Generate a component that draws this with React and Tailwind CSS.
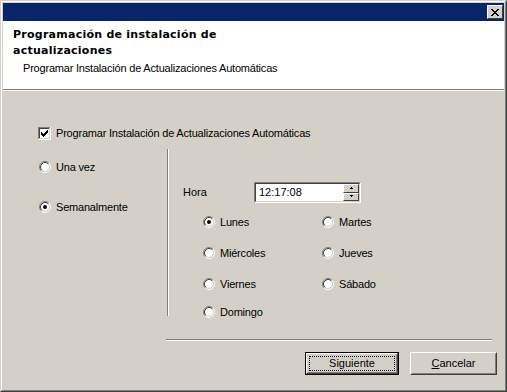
import React from "react";

const font = { fontFamily: '"Liberation Sans", Arial, sans-serif' };
const titleFont = { fontFamily: '"DejaVu Sans", Verdana, sans-serif' };

function Radio({ checked }) {
  return (
    <svg width="12" height="12" viewBox="0 0 12 12" className="shrink-0">
      <circle cx="6" cy="6" r="4" fill="#ffffff" />
      <path d="M2.11 9.89 A5.5 5.5 0 0 1 9.89 2.11" stroke="#808080" fill="none" strokeWidth="1" />
      <path d="M9.89 2.11 A5.5 5.5 0 0 1 2.11 9.89" stroke="#ffffff" fill="none" strokeWidth="1" />
      <path d="M2.82 9.18 A4.5 4.5 0 0 1 9.18 2.82" stroke="#404040" fill="none" strokeWidth="1" />
      <path d="M9.18 2.82 A4.5 4.5 0 0 1 2.82 9.18" stroke="#D4D0C8" fill="none" strokeWidth="1" />
      {checked && <circle cx="6" cy="6" r="2" fill="#000000" />}
    </svg>
  );
}

function Checkbox() {
  const check = [
    [6, 0, 1], [5, 1, 2], [0, 2, 1], [4, 2, 3], [0, 3, 2], [3, 3, 3], [0, 4, 5], [1, 5, 3], [2, 6, 1],
  ];
  return (
    <svg width="13" height="13" viewBox="0 0 13 13" className="shrink-0" shapeRendering="crispEdges">
      <rect x="0" y="0" width="13" height="13" fill="#ffffff" />
      <rect x="0" y="0" width="12" height="1" fill="#808080" />
      <rect x="0" y="0" width="1" height="12" fill="#808080" />
      <rect x="1" y="1" width="10" height="1" fill="#404040" />
      <rect x="1" y="1" width="1" height="10" fill="#404040" />
      <rect x="1" y="11" width="11" height="1" fill="#D4D0C8" />
      <rect x="11" y="1" width="1" height="11" fill="#D4D0C8" />
      {check.map(([x, y, w], i) => (
        <rect key={i} x={3 + x} y={3 + y} width={w} height="1" fill="#000000" />
      ))}
    </svg>
  );
}

function RadioRow({ checked, label, className = "" }) {
  return (
    <div className={"flex items-center h-[12px] " + className}>
      <Radio checked={checked} />
      <span className="ml-[5px] text-[11px] leading-[13px] tracking-[-0.2px] text-black whitespace-nowrap">{label}</span>
    </div>
  );
}

function CloseGlyph() {
  const rows = [
    [[0, 2], [6, 2]],
    [[1, 2], [5, 2]],
    [[2, 4]],
    [[3, 2]],
    [[2, 4]],
    [[1, 2], [5, 2]],
    [[0, 2], [6, 2]],
  ];
  return (
    <svg width="8" height="7" viewBox="0 0 8 7" shapeRendering="crispEdges">
      {rows.map((r, y) =>
        r.map(([x, w], i) => <rect key={y + "-" + i} x={x} y={y} width={w} height="1" fill="#000" />)
      )}
    </svg>
  );
}

function Spinner() {
  return (
    <div className="flex flex-col w-[16px] h-[17px]">
      <div className="flex-1 flex items-center justify-center bg-[#D4D0C8] border border-t-white border-l-white border-b-[#404040] border-r-[#404040]">
        <svg width="5" height="3" viewBox="0 0 5 3" shapeRendering="crispEdges">
          <rect x="2" y="0" width="1" height="1" fill="#000" />
          <rect x="1" y="1" width="3" height="1" fill="#000" />
        </svg>
      </div>
      <div className="flex-1 flex items-center justify-center bg-[#D4D0C8] border border-t-white border-l-white border-b-[#404040] border-r-[#404040]">
        <svg width="5" height="3" viewBox="0 0 5 3" shapeRendering="crispEdges">
          <rect x="1" y="0" width="3" height="1" fill="#000" />
          <rect x="2" y="1" width="1" height="1" fill="#000" />
        </svg>
      </div>
    </div>
  );
}

export default function App() {
  return (
    <div style={font} className="w-[507px] h-[392px] text-black select-none">
      <div className="w-full h-full border border-t-[#D4D0C8] border-l-[#D4D0C8] border-b-[#404040] border-r-[#404040]">
        <div className="w-full h-full border border-t-white border-l-white border-b-[#808080] border-r-[#808080] bg-[#D4D0C8] p-[1px] flex flex-col">
          {/* title bar */}
          <div className="h-[18px] bg-[#0A246A] flex items-center justify-end pr-[1px]">
            <div className="w-[16px] h-[14px] bg-[#D4D0C8] border border-t-white border-l-white border-b-[#404040] border-r-[#404040] flex items-center justify-center">
              <CloseGlyph />
            </div>
          </div>
          {/* header */}
          <div className="h-[68px] bg-white pl-[10px] pt-[6px]">
            <div style={titleFont} className="font-bold text-[11px] leading-[16px] tracking-[0.25px]">
              <div>Programación de instalación de</div>
              <div>actualizaciones</div>
            </div>
            <div className="mt-[2px] pl-[10px] text-[11px] leading-[14px] tracking-[-0.2px]">
              Programar Instalación de Actualizaciones Automáticas
            </div>
          </div>
          <div className="h-[1px] bg-[#808080]" />
          <div className="h-[1px] bg-white" />
          {/* body */}
          <div className="flex-1 flex flex-col">
            <div className="mt-[36px] h-[13px] pl-[35px] flex items-center">
              <Checkbox />
              <span className="ml-[5px] text-[11px] leading-[13px] tracking-[-0.2px] whitespace-nowrap">
                Programar Instalación de Actualizaciones Automáticas
              </span>
            </div>
            <div className="mt-[9px] h-[167px] flex">
              <div className="w-[164px] pl-[36px] pt-[12px]">
                <RadioRow label="Una vez" />
                <RadioRow checked label="Semanalmente" className="mt-[28px]" />
              </div>
              <div className="w-[2px] h-full border-l border-l-[#808080] border-r border-r-white" />
              <div className="flex-1 pl-[14px] pt-[33px]">
                <div className="flex items-center h-[21px]">
                  <span className="w-[71px] text-[11px] leading-[13px]">Hora</span>
                  <div className="w-[107px] h-[21px] border border-t-[#808080] border-l-[#808080] border-b-white border-r-white">
                    <div className="w-full h-full border border-t-[#404040] border-l-[#404040] border-b-[#D4D0C8] border-r-[#D4D0C8] bg-white flex items-center">
                      <span className="flex-1 pl-[3px] text-[11px] leading-[13px]">12:17:08</span>
                      <Spinner />
                    </div>
                  </div>
                </div>
                <div className="pl-[20px] mt-[13px] flex flex-col">
                  <div className="flex">
                    <RadioRow checked label="Lunes" className="w-[119px]" />
                    <RadioRow label="Martes" />
                  </div>
                  <div className="flex mt-[19px]">
                    <RadioRow label="Miércoles" className="w-[119px]" />
                    <RadioRow label="Jueves" />
                  </div>
                  <div className="flex mt-[19px]">
                    <RadioRow label="Viernes" className="w-[119px]" />
                    <RadioRow label="Sábado" />
                  </div>
                  <div className="flex mt-[16px]">
                    <RadioRow label="Domingo" className="w-[119px]" />
                  </div>
                </div>
              </div>
            </div>
            {/* separator */}
            <div className="mt-[23px] ml-[163px] w-[326px]">
              <div className="h-[1px] bg-[#808080]" />
              <div className="h-[1px] bg-white" />
            </div>
            {/* buttons */}
            <div className="mt-[11px] flex pl-[302px]">
              <div className="w-[94px] h-[23px] border border-black">
                <div className="w-full h-full border border-t-white border-l-white border-b-[#404040] border-r-[#404040]">
                  <div className="w-full h-full border border-t-[#D4D0C8] border-l-[#D4D0C8] border-b-[#808080] border-r-[#808080] bg-[#D4D0C8] p-[1px]">
                    <div className="w-full h-full border border-dotted border-black flex items-center justify-center text-[11px] leading-[13px]">
                      Siguiente
                    </div>
                  </div>
                </div>
              </div>
              <div className="ml-[11px] w-[87px] h-[23px] border border-t-white border-l-white border-b-[#404040] border-r-[#404040]">
                <div className="w-full h-full border border-t-[#D4D0C8] border-l-[#D4D0C8] border-b-[#808080] border-r-[#808080] bg-[#D4D0C8] flex items-center justify-center text-[11px] leading-[13px]">
                  <span><span className="underline">C</span>ancelar</span>
                </div>
              </div>
            </div>
          </div>
        </div>
      </div>
    </div>
  );
}
